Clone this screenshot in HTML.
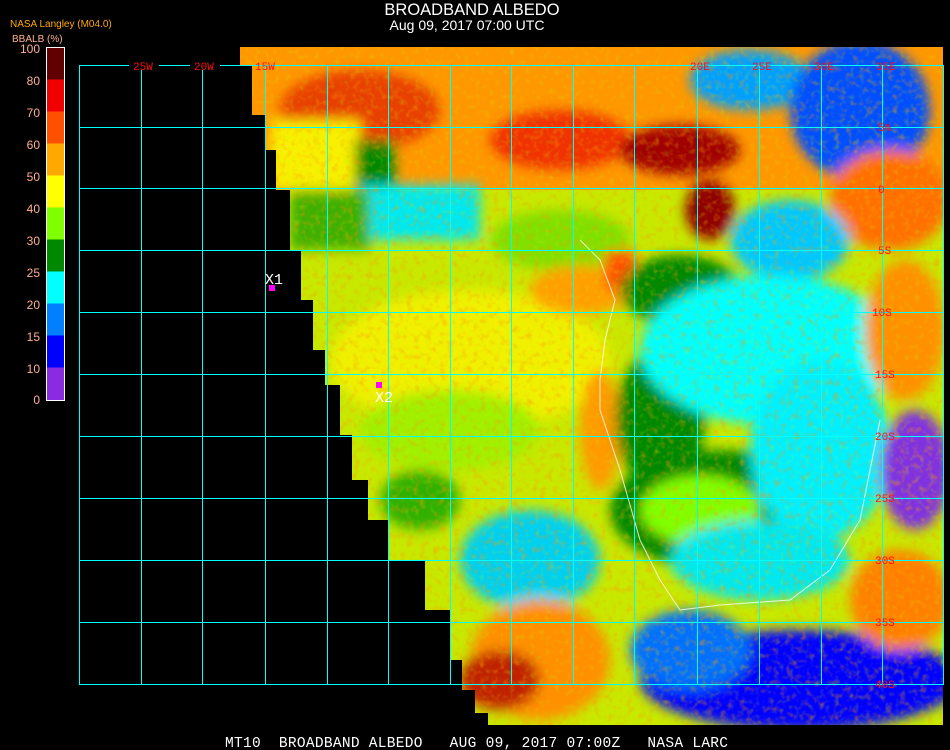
<!DOCTYPE html>
<html><head><meta charset="utf-8"><style>
html,body{margin:0;padding:0;background:#000;width:950px;height:750px;overflow:hidden}
svg{display:block}
</style></head><body>
<svg width="950" height="750" viewBox="0 0 950 750" xmlns="http://www.w3.org/2000/svg" font-family="Liberation Sans, sans-serif">
<defs>
<clipPath id="land">
<polygon points="240,47 943,47 943,725 488,725 488,713 475,713 475,690 462,690 462,660 450,660 450,610 425,610 425,560 388,560 388,520 368,520 368,480 352,480 352,435 340,435 340,385 325,385 325,350 313,350 313,300 301,300 301,250 290,250 290,190 276,190 276,150 265,150 265,115 252,115 252,65 240,65"/>
</clipPath>
<filter id="noise" x="0" y="0" width="100%" height="100%">
<feTurbulence type="fractalNoise" baseFrequency="0.15" numOctaves="2" seed="3"/>
<feColorMatrix type="matrix" values="0 0 0 0 1  0 0 0 0 0.3  0 0 0 0 0  0 0 0 1.8 -0.9"/>
</filter>
<filter id="noise2" x="0" y="0" width="100%" height="100%">
<feTurbulence type="fractalNoise" baseFrequency="0.2" numOctaves="1" seed="9"/>
<feColorMatrix type="matrix" values="0 0 0 0 0.5  0 0 0 0 1  0 0 0 0 0  0 0 0 1.8 -0.95"/>
</filter>
<filter id="blur6"><feGaussianBlur stdDeviation="6"/></filter>
</defs>
<g clip-path="url(#land)">
<rect x="230" y="40" width="720" height="690" fill="#c8e800"/>
<rect x="230" y="40" width="720" height="150" fill="#ff9800"/>
<g filter="url(#blur6)">
<ellipse cx="360" cy="110" rx="80" ry="40" fill="#e84000"/>
<ellipse cx="560" cy="140" rx="70" ry="30" fill="#f03000"/>
<ellipse cx="680" cy="150" rx="60" ry="25" fill="#a00000"/>
<ellipse cx="710" cy="210" rx="25" ry="30" fill="#900000"/>
<ellipse cx="750" cy="80" rx="60" ry="30" fill="#00a0ff"/>
<ellipse cx="860" cy="110" rx="70" ry="70" fill="#0050ff"/>
<ellipse cx="890" cy="200" rx="60" ry="50" fill="#ff7000"/>
<ellipse cx="790" cy="240" rx="60" ry="40" fill="#00c8ff"/>
<rect x="270" y="120" width="90" height="70" fill="#f8f000"/>
<rect x="355" y="140" width="40" height="50" fill="#008800"/>
<rect x="360" y="185" width="120" height="55" fill="#00e8f0"/>
<rect x="290" y="190" width="80" height="60" fill="#40b000"/>
<ellipse cx="560" cy="240" rx="70" ry="30" fill="#80e000"/>
<ellipse cx="470" cy="360" rx="140" ry="70" fill="#f0f000"/>
<ellipse cx="580" cy="290" rx="50" ry="25" fill="#ffa000"/>
<rect x="605" y="250" width="30" height="40" fill="#ff5000"/>
<ellipse cx="600" cy="430" rx="20" ry="60" fill="#ff9a00"/>
<ellipse cx="450" cy="430" rx="90" ry="40" fill="#a0f000"/>
<ellipse cx="680" cy="290" rx="60" ry="35" fill="#008800"/>
<ellipse cx="660" cy="420" rx="45" ry="70" fill="#008800"/>
<ellipse cx="720" cy="510" rx="110" ry="60" fill="#008800"/>
<ellipse cx="700" cy="510" rx="60" ry="35" fill="#80ff00"/>
<ellipse cx="770" cy="350" rx="130" ry="75" fill="#00ffff"/>
<ellipse cx="820" cy="450" rx="70" ry="90" fill="#00f0ff"/>
<ellipse cx="760" cy="560" rx="90" ry="40" fill="#00e8f0"/>
<ellipse cx="905" cy="330" rx="40" ry="70" fill="#ff9000"/>
<ellipse cx="915" cy="470" rx="35" ry="60" fill="#8030e0"/>
<ellipse cx="800" cy="680" rx="160" ry="50" fill="#0000ff"/>
<ellipse cx="690" cy="650" rx="60" ry="40" fill="#0070ff"/>
<ellipse cx="900" cy="600" rx="50" ry="50" fill="#ff8000"/>
<ellipse cx="530" cy="560" rx="70" ry="50" fill="#00d0f0"/>
<ellipse cx="540" cy="660" rx="70" ry="60" fill="#ff9000"/>
<ellipse cx="500" cy="680" rx="40" ry="30" fill="#c02000"/>
<ellipse cx="420" cy="500" rx="40" ry="30" fill="#30b000"/>
</g>
<rect x="230" y="40" width="720" height="690" filter="url(#noise)" opacity="0.6"/>
<rect x="230" y="40" width="720" height="690" filter="url(#noise2)" opacity="0.4"/>
</g>
<polyline points="580,240 600,260 615,300 605,340 600,380 600,410 620,470 640,540 660,580 680,610 720,605 790,600 830,570 860,520 870,470 880,420" fill="none" stroke="#fff" stroke-width="1" opacity="0.8"/>
<g stroke="#00ffff" stroke-width="1" fill="none">
<rect x="79.5" y="65.5" width="864" height="619"/>
<path d="M141.5 65v620M202.5 65v620M265.5 65v620M327.5 65v620M388.5 65v620M450.5 65v620M511.5 65v620M573.5 65v620M634.5 65v620M697.5 65v620M759.5 65v620M821.5 65v620M882.5 65v620"/>
<path d="M79 127.5h865M79 188.5h865M79 250.5h865M79 312.5h865M79 374.5h865M79 436.5h865M79 498.5h865M79 560.5h865M79 622.5h865"/>
</g>
<g fill="#ff1010" font-size="11" font-family="Liberation Mono, monospace">
<rect x="129" y="58" width="30" height="12" fill="#000"/><text x="133" y="70">25W</text>
<rect x="190" y="58" width="30" height="12" fill="#000"/><text x="194" y="70">20W</text>
<text x="255" y="70">15W</text><text x="690" y="70">20E</text><text x="752" y="70">25E</text><text x="814" y="70">30E</text><text x="876" y="70">35E</text>
<text x="878" y="131">5N</text><text x="878" y="193">0</text><text x="878" y="254">5S</text><text x="872" y="316">10S</text><text x="875" y="378">15S</text><text x="875" y="440">20S</text><text x="875" y="502">25S</text><text x="875" y="564">30S</text><text x="875" y="626">35S</text><text x="875" y="688">40S</text>
</g>
<text x="265" y="284" fill="#fff" font-size="15" font-family="Liberation Mono, monospace">X1</text>
<rect x="269" y="285" width="6" height="6" fill="#ff00ff"/>
<rect x="376" y="382" width="6" height="6" fill="#ff00ff"/>
<text x="375" y="402" fill="#fff" font-size="15" font-family="Liberation Mono, monospace">X2</text>
<text x="472" y="15" fill="#fff" font-size="16.5" text-anchor="middle">BROADBAND ALBEDO</text>
<text x="467" y="30" fill="#fff" font-size="14" text-anchor="middle">Aug 09, 2017 07:00 UTC</text>
<text x="10" y="27" fill="#ffa800" font-size="10">NASA Langley (M04.0)</text>
<text x="12" y="42" fill="#ffb090" font-size="10">BBALB (%)</text>
<g>
<rect x="46" y="47.5" width="18" height="32" fill="#600000"/>
<rect x="46" y="79.5" width="18" height="32" fill="#f00000"/>
<rect x="46" y="111.5" width="18" height="32" fill="#ff5000"/>
<rect x="46" y="143.5" width="18" height="32" fill="#ffa800"/>
<rect x="46" y="175.5" width="18" height="32" fill="#ffff00"/>
<rect x="46" y="207.5" width="18" height="32" fill="#80ff00"/>
<rect x="46" y="239.5" width="18" height="32" fill="#008800"/>
<rect x="46" y="271.5" width="18" height="32" fill="#00ffff"/>
<rect x="46" y="303.5" width="18" height="32" fill="#0080ff"/>
<rect x="46" y="335.5" width="18" height="32" fill="#0000ff"/>
<rect x="46" y="367.5" width="18" height="33" fill="#8a2be2"/>
<rect x="46.5" y="47.5" width="18" height="353" fill="none" stroke="#fff" stroke-width="1"/>
</g>
<g fill="#ffb090" font-size="12" text-anchor="end">
<text x="40" y="53">100</text><text x="40" y="85">80</text><text x="40" y="117">70</text><text x="40" y="149">60</text><text x="40" y="181">50</text><text x="40" y="213">40</text><text x="40" y="245">30</text><text x="40" y="277">25</text><text x="40" y="309">20</text><text x="40" y="341">15</text><text x="40" y="373">10</text><text x="40" y="404">0</text>
</g>
<text x="225" y="747" fill="#fff" font-size="14.5" font-family="Liberation Mono, monospace" xml:space="preserve" textLength="503">MT10  BROADBAND ALBEDO   AUG 09, 2017 07:00Z   NASA LARC</text>
</svg>
</body></html>
